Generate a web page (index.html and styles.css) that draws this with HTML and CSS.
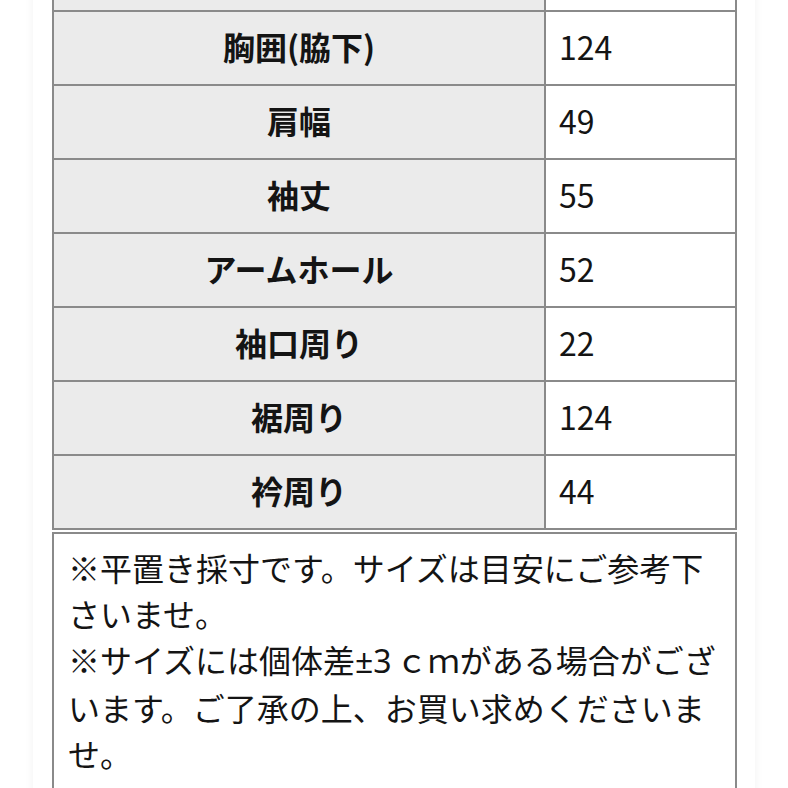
FILE: index.html
```html
<!DOCTYPE html>
<html lang="ja">
<head>
<meta charset="utf-8">
<link rel="stylesheet" href="styles.css">
</head>
<body>
<div class="page">
  <table class="size">
    <tr><th></th><td></td></tr>
    <tr><th>胸囲(脇下)</th><td>124</td></tr>
    <tr><th>肩幅</th><td>49</td></tr>
    <tr><th>袖丈</th><td>55</td></tr>
    <tr><th>アームホール</th><td>52</td></tr>
    <tr><th>袖口周り</th><td>22</td></tr>
    <tr><th>裾周り</th><td>124</td></tr>
    <tr><th>衿周り</th><td>44</td></tr>
  </table>
  <div class="note">
    <p>※平置き採寸です。サイズは目安にご参考下さいませ。</p>
    <p>※サイズには個体差<span class="latin">±3</span>ｃｍがある場合がございます。ご了承の上、お買い求めくださいませ。</p>
  </div>
</div>
</body>
</html>
```
FILE: styles.css
```css
html, body {
  margin: 0;
  padding: 0;
  background: #ffffff;
  height: 100%;
  overflow: hidden;
}
body {
  font-family: "Noto Sans CJK JP", "Noto Sans", sans-serif;
  color: #141414;
}
.page {
  margin: 0 33px;
  padding: 0 18px 0 19px;
  background: #ffffff;
  box-shadow: 0 0 10px rgba(0, 0, 0, 0.05);
  min-height: 900px;
}
.size {
  width: 100%;
  border-collapse: collapse;
  margin-top: -64px;
  table-layout: fixed;
}
.size tr {
  height: 74px;
}
.size th,
.size td {
  border: 2px solid #8a8a8a;
  font-size: 32px;
  line-height: 1;
  padding: 0 0 5px 0;
  vertical-align: middle;
}
.size th {
  width: 490px;
  background: #ebebeb;
  font-weight: bold;
  text-align: center;
}
.size td {
  background: #ffffff;
  text-align: left;
  padding-left: 13px;
  font-weight: normal;
}
.note {
  margin-top: 2px;
  border: 2px solid #8a8a8a;
  padding: 10px 14px 13px 14px;
  min-height: 300px;
}
.note p {
  margin: 0;
  font-size: 32px;
  line-height: 46px;
}
.latin {
  font-family: "Noto Sans", sans-serif;
  padding-right: 4px;
}
```
